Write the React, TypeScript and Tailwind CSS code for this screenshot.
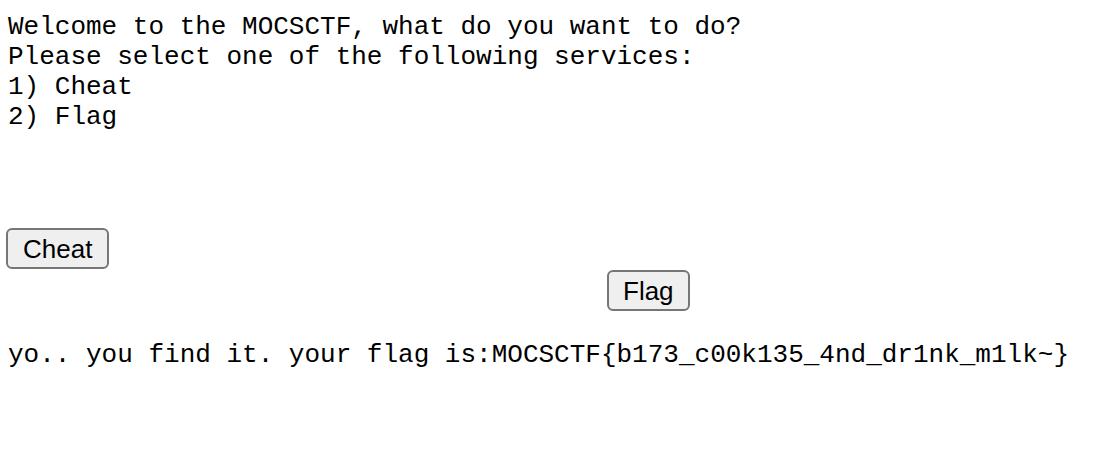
export default function App() {
  return (
    <div className="min-h-[476px] w-[1114px] bg-white text-black">
      <div className="flex flex-col items-start pt-[12px]">
        <pre className="pl-[8px] font-['Liberation_Mono',monospace] text-[26px] leading-[30px]">
          {'Welcome to the MOCSCTF, what do you want to do?\nPlease select one of the following services:\n1) Cheat\n2) Flag'}
        </pre>
        <button className="ml-[6px] mt-[96px] h-[41px] rounded-[6px] border-2 border-[#767676] bg-[#efefef] px-[15px] font-['Liberation_Sans',Arial,sans-serif] text-[26px] leading-[30px]">
          Cheat
        </button>
        <button className="ml-[607px] mt-[1px] h-[41px] rounded-[6px] border-2 border-[#767676] bg-[#efefef] px-[14px] font-['Liberation_Sans',Arial,sans-serif] text-[26px] leading-[30px]">
          Flag
        </button>
        <p className="mt-[29px] pl-[8px] font-['Liberation_Mono',monospace] text-[26px] leading-[30px]">
          yo.. you find it. your flag is:MOCSCTF{'{'}b173_c00k135_4nd_dr1nk_m1lk~{'}'}
        </p>
      </div>
    </div>
  );
}
